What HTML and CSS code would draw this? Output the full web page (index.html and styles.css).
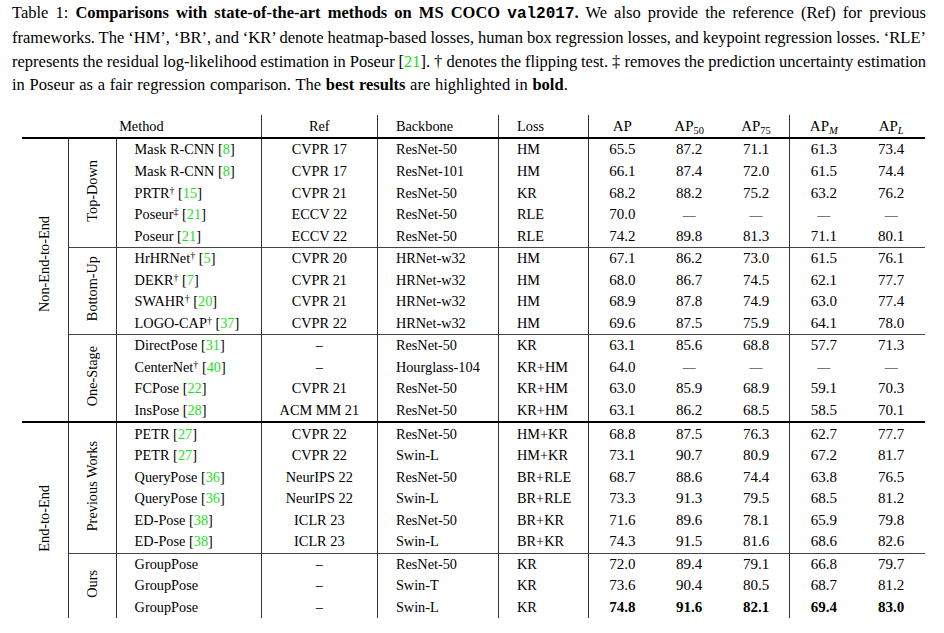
FILE: index.html
```html
<!DOCTYPE html>
<html lang="en">
<head>
<meta charset="utf-8">
<title>Table 1</title>
<link rel="stylesheet" href="styles.css">
</head>
<body>
<div class="page">
  <p class="caption">Table 1: <b>Comparisons with state-of-the-art methods on MS COCO <span class="mono">val2017</span>.</b> We also provide the reference (Ref) for previous<br>frameworks. The ‘HM’, ‘BR’, and ‘KR’ denote heatmap-based losses, human box regression losses, and keypoint regression losses. ‘RLE’<br>represents the residual log-likelihood estimation in Poseur [<span class="cite">21</span>]. † denotes the flipping test. ‡ removes the prediction uncertainty estimation<br><span class="caption-last">in Poseur as a fair regression comparison. The <b>best results</b> are highlighted in <b>bold</b>.</span></p>

  <table class="results">
    <colgroup>
      <col class="c-group"><col class="c-sub"><col class="c-method"><col class="c-ref"><col class="c-backbone"><col class="c-loss">
      <col class="c-num"><col class="c-num"><col class="c-num"><col class="c-num2"><col class="c-num2">
    </colgroup>
    <thead>
      <tr>
        <th colspan="3" class="h-center">Method</th>
        <th class="h-center vl">Ref</th>
        <th class="h-left vl">Backbone</th>
        <th class="h-left vl">Loss</th>
        <th class="num vl">AP</th>
        <th class="num">AP<sub>50</sub></th>
        <th class="num">AP<sub>75</sub></th>
        <th class="num vl">AP<sub><i>M</i></sub></th>
        <th class="num">AP<sub><i>L</i></sub></th>
      </tr>
    </thead>
    <tbody>
      <tr class="sep-thick">
        <td rowspan="13" class="rot-cell"><span class="rot rot-up">Non-End-to-End</span></td>
        <td rowspan="5" class="rot-cell vl"><span class="rot">Top-Down</span></td>
        <td class="left vl">Mask R-CNN [<span class="cite">8</span>]</td><td class="center vl">CVPR 17</td><td class="left vl">ResNet-50</td><td class="left vl">HM</td>
        <td class="num vl">65.5</td><td class="num">87.2</td><td class="num">71.1</td><td class="num vl">61.3</td><td class="num">73.4</td>
      </tr>
      <tr>
        <td class="left vl">Mask R-CNN [<span class="cite">8</span>]</td><td class="center vl">CVPR 17</td><td class="left vl">ResNet-101</td><td class="left vl">HM</td>
        <td class="num vl">66.1</td><td class="num">87.4</td><td class="num">72.0</td><td class="num vl">61.5</td><td class="num">74.4</td>
      </tr>
      <tr>
        <td class="left vl">PRTR<sup>†</sup> [<span class="cite">15</span>]</td><td class="center vl">CVPR 21</td><td class="left vl">ResNet-50</td><td class="left vl">KR</td>
        <td class="num vl">68.2</td><td class="num">88.2</td><td class="num">75.2</td><td class="num vl">63.2</td><td class="num">76.2</td>
      </tr>
      <tr>
        <td class="left vl">Poseur<sup>‡</sup> [<span class="cite">21</span>]</td><td class="center vl">ECCV 22</td><td class="left vl">ResNet-50</td><td class="left vl">RLE</td>
        <td class="num vl">70.0</td><td class="num dash">—</td><td class="num dash">—</td><td class="num vl dash">—</td><td class="num dash">—</td>
      </tr>
      <tr>
        <td class="left vl">Poseur [<span class="cite">21</span>]</td><td class="center vl">ECCV 22</td><td class="left vl">ResNet-50</td><td class="left vl">RLE</td>
        <td class="num vl">74.2</td><td class="num">89.8</td><td class="num">81.3</td><td class="num vl">71.1</td><td class="num">80.1</td>
      </tr>

      <tr class="sep-thin">
        <td rowspan="4" class="rot-cell vl"><span class="rot">Bottom-Up</span></td>
        <td class="left vl">HrHRNet<sup>†</sup> [<span class="cite">5</span>]</td><td class="center vl">CVPR 20</td><td class="left vl">HRNet-w32</td><td class="left vl">HM</td>
        <td class="num vl">67.1</td><td class="num">86.2</td><td class="num">73.0</td><td class="num vl">61.5</td><td class="num">76.1</td>
      </tr>
      <tr>
        <td class="left vl">DEKR<sup>†</sup> [<span class="cite">7</span>]</td><td class="center vl">CVPR 21</td><td class="left vl">HRNet-w32</td><td class="left vl">HM</td>
        <td class="num vl">68.0</td><td class="num">86.7</td><td class="num">74.5</td><td class="num vl">62.1</td><td class="num">77.7</td>
      </tr>
      <tr>
        <td class="left vl">SWAHR<sup>†</sup> [<span class="cite">20</span>]</td><td class="center vl">CVPR 21</td><td class="left vl">HRNet-w32</td><td class="left vl">HM</td>
        <td class="num vl">68.9</td><td class="num">87.8</td><td class="num">74.9</td><td class="num vl">63.0</td><td class="num">77.4</td>
      </tr>
      <tr>
        <td class="left vl">LOGO-CAP<sup>†</sup> [<span class="cite">37</span>]</td><td class="center vl">CVPR 22</td><td class="left vl">HRNet-w32</td><td class="left vl">HM</td>
        <td class="num vl">69.6</td><td class="num">87.5</td><td class="num">75.9</td><td class="num vl">64.1</td><td class="num">78.0</td>
      </tr>

      <tr class="sep-thin">
        <td rowspan="4" class="rot-cell vl"><span class="rot">One-Stage</span></td>
        <td class="left vl">DirectPose [<span class="cite">31</span>]</td><td class="center vl">–</td><td class="left vl">ResNet-50</td><td class="left vl">KR</td>
        <td class="num vl">63.1</td><td class="num">85.6</td><td class="num">68.8</td><td class="num vl">57.7</td><td class="num">71.3</td>
      </tr>
      <tr>
        <td class="left vl">CenterNet<sup>†</sup> [<span class="cite">40</span>]</td><td class="center vl">–</td><td class="left vl">Hourglass-104</td><td class="left vl">KR+HM</td>
        <td class="num vl">64.0</td><td class="num dash">—</td><td class="num dash">—</td><td class="num vl dash">—</td><td class="num dash">—</td>
      </tr>
      <tr>
        <td class="left vl">FCPose [<span class="cite">22</span>]</td><td class="center vl">CVPR 21</td><td class="left vl">ResNet-50</td><td class="left vl">KR+HM</td>
        <td class="num vl">63.0</td><td class="num">85.9</td><td class="num">68.9</td><td class="num vl">59.1</td><td class="num">70.3</td>
      </tr>
      <tr>
        <td class="left vl">InsPose [<span class="cite">28</span>]</td><td class="center vl">ACM MM 21</td><td class="left vl">ResNet-50</td><td class="left vl">KR+HM</td>
        <td class="num vl">63.1</td><td class="num">86.2</td><td class="num">68.5</td><td class="num vl">58.5</td><td class="num">70.1</td>
      </tr>

      <tr class="sep-thick">
        <td rowspan="9" class="rot-cell"><span class="rot">End-to-End</span></td>
        <td rowspan="6" class="rot-cell vl"><span class="rot">Previous Works</span></td>
        <td class="left vl">PETR [<span class="cite">27</span>]</td><td class="center vl">CVPR 22</td><td class="left vl">ResNet-50</td><td class="left vl">HM+KR</td>
        <td class="num vl">68.8</td><td class="num">87.5</td><td class="num">76.3</td><td class="num vl">62.7</td><td class="num">77.7</td>
      </tr>
      <tr>
        <td class="left vl">PETR [<span class="cite">27</span>]</td><td class="center vl">CVPR 22</td><td class="left vl">Swin-L</td><td class="left vl">HM+KR</td>
        <td class="num vl">73.1</td><td class="num">90.7</td><td class="num">80.9</td><td class="num vl">67.2</td><td class="num">81.7</td>
      </tr>
      <tr>
        <td class="left vl">QueryPose [<span class="cite">36</span>]</td><td class="center vl">NeurIPS 22</td><td class="left vl">ResNet-50</td><td class="left vl">BR+RLE</td>
        <td class="num vl">68.7</td><td class="num">88.6</td><td class="num">74.4</td><td class="num vl">63.8</td><td class="num">76.5</td>
      </tr>
      <tr>
        <td class="left vl">QueryPose [<span class="cite">36</span>]</td><td class="center vl">NeurIPS 22</td><td class="left vl">Swin-L</td><td class="left vl">BR+RLE</td>
        <td class="num vl">73.3</td><td class="num">91.3</td><td class="num">79.5</td><td class="num vl">68.5</td><td class="num">81.2</td>
      </tr>
      <tr>
        <td class="left vl">ED-Pose [<span class="cite">38</span>]</td><td class="center vl">ICLR 23</td><td class="left vl">ResNet-50</td><td class="left vl">BR+KR</td>
        <td class="num vl">71.6</td><td class="num">89.6</td><td class="num">78.1</td><td class="num vl">65.9</td><td class="num">79.8</td>
      </tr>
      <tr>
        <td class="left vl">ED-Pose [<span class="cite">38</span>]</td><td class="center vl">ICLR 23</td><td class="left vl">Swin-L</td><td class="left vl">BR+KR</td>
        <td class="num vl">74.3</td><td class="num">91.5</td><td class="num">81.6</td><td class="num vl">68.6</td><td class="num">82.6</td>
      </tr>

      <tr class="sep-thin">
        <td rowspan="3" class="rot-cell vl"><span class="rot">Ours</span></td>
        <td class="left vl">GroupPose</td><td class="center vl">–</td><td class="left vl">ResNet-50</td><td class="left vl">KR</td>
        <td class="num vl">72.0</td><td class="num">89.4</td><td class="num">79.1</td><td class="num vl">66.8</td><td class="num">79.7</td>
      </tr>
      <tr>
        <td class="left vl">GroupPose</td><td class="center vl">–</td><td class="left vl">Swin-T</td><td class="left vl">KR</td>
        <td class="num vl">73.6</td><td class="num">90.4</td><td class="num">80.5</td><td class="num vl">68.7</td><td class="num">81.2</td>
      </tr>
      <tr class="best">
        <td class="left vl">GroupPose</td><td class="center vl">–</td><td class="left vl">Swin-L</td><td class="left vl">KR</td>
        <td class="num vl">74.8</td><td class="num">91.6</td><td class="num">82.1</td><td class="num vl">69.4</td><td class="num">83.0</td>
      </tr>
    </tbody>
  </table>
</div>
</body>
</html>
```

FILE: styles.css
```css
html, body {
  margin: 0;
  padding: 0;
  background: #ffffff;
}

body {
  font-family: "Liberation Serif", "Times New Roman", serif;
  color: #000000;
}

.page {
  width: 944px;
  padding-top: 1px;
}

.caption {
  margin: 0 0 19px 12px;
  width: 914px;
  font-size: 16.5px;
  line-height: 23.3px;
  word-spacing: -0.6px;
  text-align: justify;
  text-align-last: justify;
}

.caption-last {
  display: block;
  text-align: left;
  text-align-last: left;
  word-spacing: 0.6px;
}

.caption b {
  font-weight: bold;
}

.mono {
  font-family: "Liberation Mono", "Courier New", monospace;
  font-weight: bold;
  font-size: 16px;
}

.cite {
  color: #1fe01f;
}

.results {
  margin-left: 22px;
  width: 903px;
  table-layout: fixed;
  border-collapse: collapse;
  font-size: 14.3px;
}

.c-group { width: 46px; }
.c-sub { width: 48px; }
.c-method { width: 145px; }
.c-ref { width: 116px; }
.c-backbone { width: 121px; }
.c-loss { width: 90px; }
.c-num { width: 67px; }
.c-num2 { width: 67.5px; }

.results th,
.results td {
  padding: 0;
  height: 21.55px;
  white-space: nowrap;
  vertical-align: middle;
  font-weight: normal;
}

.results thead th {
  height: 22px;
  border-bottom: 2px solid #000;
}

.h-center { text-align: center; }
.h-left { text-align: left; padding-left: 18px !important; }

.left {
  text-align: left;
  padding-left: 18px !important;
}

.center {
  text-align: center;
}

.num {
  text-align: center;
  font-size: 15px;
}

.vl {
  border-left: 1px solid #333;
}

.sep-thin > td {
  border-top: 1px solid #444;
}

.sep-thick > td {
  border-top: 2px solid #000;
}

.best .num {
  font-weight: bold;
}

sup {
  font-size: 70%;
  line-height: 0;
  vertical-align: 0.45em;
}

sub {
  font-size: 70%;
  line-height: 0;
  vertical-align: -0.3em;
}

.dash {
  font-size: 13px;
}

.rot-cell {
  text-align: center;
  padding: 0;
}

.rot {
  display: inline-block;
  writing-mode: vertical-rl;
  transform: rotate(180deg);
  white-space: nowrap;
}

.rot-up {
  position: relative;
  top: -14px;
}
```
